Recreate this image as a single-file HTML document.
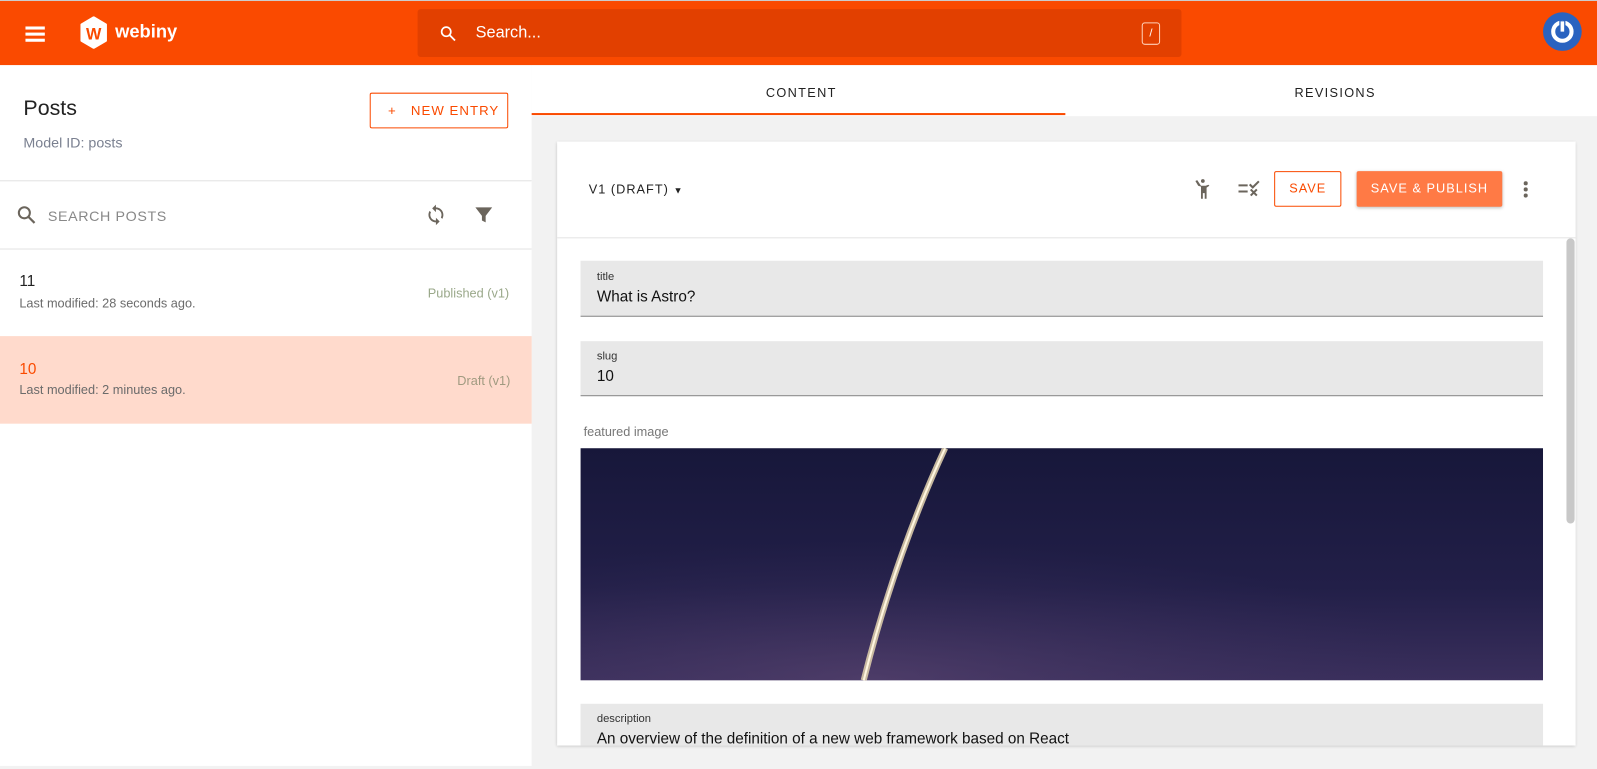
<!DOCTYPE html>
<html><head><meta charset="utf-8"><style>
*{box-sizing:border-box;margin:0;padding:0}
html,body{width:1597px;height:769px;overflow:hidden;background:#f2f2f2}
body{font-family:"Liberation Sans",sans-serif;position:relative}
#w{position:absolute;left:0;top:0;width:1568px;height:755px;transform:scale(1.0185);transform-origin:0 0}
.abs{position:absolute}
.hdr{left:0;top:1px;width:1568px;height:63px;background:#fa4a00}
.txt{white-space:nowrap}
</style></head><body><div id="w">
<div class="abs" style="left:0;top:0;width:1568px;height:1px;background:#ccc"></div>
<div class="abs hdr"></div>
<div class="abs" style="left:25px;top:26px;width:19px;height:2.5px;background:#fff"></div>
<div class="abs" style="left:25px;top:32px;width:19px;height:2.5px;background:#fff"></div>
<div class="abs" style="left:25px;top:38px;width:19px;height:2.5px;background:#fff"></div>
<svg class="abs" style="left:78px;top:16px" width="28" height="32" viewBox="0 0 28 32"><path d="M14 1 L26 8 V24 L14 31 L2 24 V8Z" fill="#fff" stroke="#fff" stroke-width="2" stroke-linejoin="round"/><text x="14" y="23" font-size="16" font-weight="bold" fill="#fa4a00" text-anchor="middle" font-family="Liberation Sans">W</text></svg>
<div class="abs txt" style="left:113px;top:21px;color:#fff;font-size:18px;font-weight:bold">webiny</div>
<div class="abs" style="left:410px;top:9px;width:750px;height:47px;background:#e24000;border-radius:3px"></div>
<svg class="abs" style="left:431px;top:24px" width="18" height="18" viewBox="0 0 24 24"><circle cx="9.5" cy="9.5" r="6" fill="none" stroke="#fff" stroke-width="2.2"/><path d="M14 14l7 7" stroke="#fff" stroke-width="2.4"/></svg>
<div class="abs txt" style="left:467px;top:24px;color:#fff;font-size:16px">Search...</div>
<div class="abs" style="left:1121px;top:22px;width:18px;height:22px;border:1px solid #ffd0b8;border-radius:3px;color:#fff;font-size:11px;text-align:center;line-height:20px">/</div>
<div class="abs" style="left:1515px;top:12px;width:38px;height:38px;border-radius:50%;background:#2a63c0"></div>
<svg class="abs" style="left:1519px;top:16px" width="30" height="30" viewBox="0 0 30 30"><circle cx="15" cy="15" r="9" fill="none" stroke="#fff" stroke-width="4"/><path d="M15 4v11" stroke="#2a63c0" stroke-width="6"/><path d="M15 5v10" stroke="#fff" stroke-width="3.5"/></svg>

<div class="abs" style="left:0;top:64px;width:522px;height:688px;background:#fff"></div>
<div class="abs txt" style="left:23px;top:95px;font-size:21px;color:#222">Posts</div>
<div class="abs txt" style="left:23px;top:132px;font-size:14px;color:#7a8090">Model ID: posts</div>
<div class="abs" style="left:363px;top:91px;width:136px;height:35px;border:1px solid #fa4a00;border-radius:2px"></div>
<div class="abs txt" style="left:381px;top:101px;font-size:13px;color:#fa4a00;letter-spacing:1px">+&nbsp;&nbsp; NEW ENTRY</div>
<div class="abs" style="left:0;top:177px;width:522px;height:1px;background:#e3e3e3"></div>
<svg class="abs" style="left:16px;top:201px" width="20" height="20" viewBox="0 0 24 24"><circle cx="9.5" cy="9.5" r="6.5" fill="none" stroke="#6b655c" stroke-width="2.4"/><path d="M14.5 14.5l7 7" stroke="#6b655c" stroke-width="2.6"/></svg>
<div class="abs txt" style="left:47px;top:204px;font-size:14px;color:#888;letter-spacing:.6px">SEARCH POSTS</div>
<svg class="abs" style="left:417px;top:200px" width="22" height="22" viewBox="0 0 24 24"><path d="M12 4V1L8 5l4 4V6c3.3 0 6 2.7 6 6 0 1-.3 2-.7 2.8l1.5 1.5C19.5 15 20 13.6 20 12c0-4.4-3.6-8-8-8zm0 14c-3.3 0-6-2.7-6-6 0-1 .3-2 .7-2.8L5.2 7.7C4.5 9 4 10.4 4 12c0 4.4 3.6 8 8 8v3l4-4-4-4v3z" fill="#6b655c"/></svg>
<svg class="abs" style="left:464px;top:200px" width="22" height="22" viewBox="0 0 24 24"><path d="M3 4h18l-7 9v7l-4-2v-5z" fill="#6b655c"/></svg>
<div class="abs" style="left:0;top:244px;width:522px;height:1px;background:#e3e3e3"></div>
<div class="abs txt" style="left:19px;top:268px;font-size:15px;color:#222">11</div>
<div class="abs txt" style="left:19px;top:291px;font-size:12.5px;color:#6b6b6b">Last modified: 28 seconds ago.</div>
<div class="abs txt" style="left:420px;top:281px;font-size:12.5px;color:#9aa88a">Published (v1)</div>
<div class="abs" style="left:0;top:330px;width:522px;height:86px;background:#ffdacc"></div>
<div class="abs txt" style="left:19px;top:354px;font-size:15px;color:#fa4a00">10</div>
<div class="abs txt" style="left:19px;top:376px;font-size:12.5px;color:#6b6b6b">Last modified: 2 minutes ago.</div>
<div class="abs txt" style="left:449px;top:367px;font-size:12.5px;color:#a09a80">Draft (v1)</div>

<div class="abs" style="left:522px;top:64px;width:1046px;height:50px;background:#fff"></div>
<div class="abs txt" style="left:752px;top:84px;font-size:12.5px;letter-spacing:1.3px;color:#222">CONTENT</div>
<div class="abs txt" style="left:1271px;top:84px;font-size:12.5px;letter-spacing:1.3px;color:#222">REVISIONS</div>
<div class="abs" style="left:522px;top:111px;width:524px;height:2px;background:#fa4a00"></div>

<div class="abs" style="left:547px;top:139px;width:1000px;height:593px;background:#fff;box-shadow:0 1px 3px rgba(0,0,0,.2)"></div>
<div class="abs txt" style="left:578px;top:179px;font-size:12.5px;letter-spacing:1px;color:#222">V1 (DRAFT) <span style="font-size:9px">▼</span></div>
<svg class="abs" style="left:1170px;top:174px" width="22" height="24" viewBox="0 0 24 24"><circle cx="12" cy="3" r="2" fill="#6b655c"/><path d="M4 3l3 5 3 1v13h2v-6h2v6h2V10l3-2-1-1-3 1h-5L6 2z" fill="#6b655c"/></svg>
<svg class="abs" style="left:1214px;top:175px" width="24" height="20" viewBox="0 0 24 20"><path d="M2 7h9M2 13h9" stroke="#6b655c" stroke-width="2"/><path d="M13 6l3 3 6-6" stroke="#6b655c" stroke-width="2" fill="none"/><path d="M14 11l6 6M20 11l-6 6" stroke="#6b655c" stroke-width="2"/></svg>
<div class="abs" style="left:1251px;top:168px;width:66px;height:35px;border:1px solid #fa4a00;border-radius:2px;color:#fa4a00;font-size:12.5px;letter-spacing:1px;text-align:center;line-height:33px">SAVE</div>
<div class="abs" style="left:1332px;top:168px;width:143px;height:35px;background:#ff7a45;border-radius:2px;color:#fff;font-size:12.5px;letter-spacing:1px;text-align:center;line-height:35px;box-shadow:0 1px 3px rgba(0,0,0,.25)">SAVE &amp; PUBLISH</div>
<div class="abs" style="left:1496px;top:178px;width:4px;height:4px;border-radius:50%;background:#6b655c"></div>
<div class="abs" style="left:1496px;top:184px;width:4px;height:4px;border-radius:50%;background:#6b655c"></div>
<div class="abs" style="left:1496px;top:190px;width:4px;height:4px;border-radius:50%;background:#6b655c"></div>
<div class="abs" style="left:547px;top:233px;width:1000px;height:1px;background:#e3e3e3"></div>
<div class="abs" style="left:1538px;top:234px;width:8px;height:280px;background:#c8c8c8;border-radius:4px"></div>

<div class="abs" style="left:570px;top:256px;width:945px;height:55px;background:#e8e8e8;border-bottom:1px solid #888"></div>
<div class="abs txt" style="left:586px;top:266px;font-size:11px;color:#333">title</div>
<div class="abs txt" style="left:586px;top:283px;font-size:15px;color:#111">What is Astro?</div>
<div class="abs" style="left:570px;top:335px;width:945px;height:54px;background:#e8e8e8;border-bottom:1px solid #888"></div>
<div class="abs txt" style="left:586px;top:344px;font-size:11px;color:#333">slug</div>
<div class="abs txt" style="left:586px;top:361px;font-size:15px;color:#111">10</div>
<div class="abs txt" style="left:573px;top:417px;font-size:12.5px;color:#777">featured image</div>
<svg class="abs" style="left:570px;top:440px" width="945" height="228" viewBox="0 0 945 228"><defs><linearGradient id="g" x1="0" y1="0" x2="0" y2="1"><stop offset="0" stop-color="#17173a"/><stop offset="0.6" stop-color="#221f48"/><stop offset="1" stop-color="#3a2f5c"/></linearGradient><radialGradient id="r" cx="0.3" cy="1" r="0.6"><stop offset="0" stop-color="#5a4570" stop-opacity=".6"/><stop offset="1" stop-color="#3a2f5c" stop-opacity="0"/></radialGradient></defs><rect width="945" height="228" fill="url(#g)"/><rect width="945" height="228" fill="url(#r)"/><path d="M358 0 C330 60 300 140 278 228" stroke="#d8c9a8" stroke-width="6" fill="none" opacity=".9"/><path d="M358 0 C330 60 300 140 278 228" stroke="#fff6e0" stroke-width="2" fill="none"/></svg>
<div class="abs" style="left:570px;top:691px;width:945px;height:41px;background:#e8e8e8"></div>
<div class="abs txt" style="left:586px;top:700px;font-size:11px;color:#333">description</div>
<div class="abs txt" style="left:586px;top:717px;font-size:15px;color:#111">An overview of the definition of a new web framework based on React</div>
</div></body></html>
